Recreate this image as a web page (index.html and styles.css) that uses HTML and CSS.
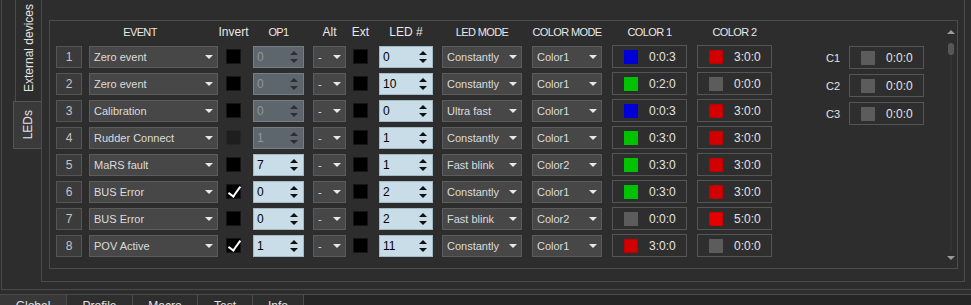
FILE: index.html
```html
<!DOCTYPE html>
<html lang="en">
<head>
    <meta charset="UTF-8">
    <title>LEDs</title>
    <link rel="stylesheet" href="styles.css">
</head>
<body>
    <div class="frame">
        <div class="side-tabs">
            <div class="vtab vtab-ext"><span>External devices</span></div>
            <div class="vtab vtab-leds"><span>LEDs</span></div>
        </div>
        <div class="pane">
            <div class="group">
                <div class="grid">
                    <div class="hd hd-event">EVENT</div>
                    <div class="hd mix w-check">Invert</div>
                    <div class="hd w-op">OP1</div>
                    <div class="hd mix w-alt">Alt</div>
                    <div class="hd mix w-check">Ext</div>
                    <div class="hd mix w-led">LED #</div>
                    <div class="hd w-mode">LED MODE</div>
                    <div class="hd w-cmode">COLOR MODE</div>
                    <div class="hd w-color">COLOR 1</div>
                    <div class="hd w-color">COLOR 2</div>

                    <div class="num">1</div>
                    <div class="combo c-event">Zero event</div>
                    <div class="check"></div>
                    <div class="spin s-op off">0<i></i></div>
                    <div class="combo c-alt">-</div>
                    <div class="check"></div>
                    <div class="spin s-led">0<i></i></div>
                    <div class="combo c-mode">Constantly</div>
                    <div class="combo c-cmode">Color1</div>
                    <div class="color"><b class="sw blue"></b>0:0:3</div>
                    <div class="color"><b class="sw red"></b>3:0:0</div>

                    <div class="num">2</div>
                    <div class="combo c-event">Zero event</div>
                    <div class="check"></div>
                    <div class="spin s-op off">0<i></i></div>
                    <div class="combo c-alt">-</div>
                    <div class="check"></div>
                    <div class="spin s-led">10<i></i></div>
                    <div class="combo c-mode">Constantly</div>
                    <div class="combo c-cmode">Color1</div>
                    <div class="color"><b class="sw green"></b>0:2:0</div>
                    <div class="color"><b class="sw gray"></b>0:0:0</div>

                    <div class="num">3</div>
                    <div class="combo c-event">Calibration</div>
                    <div class="check"></div>
                    <div class="spin s-op off">0<i></i></div>
                    <div class="combo c-alt">-</div>
                    <div class="check"></div>
                    <div class="spin s-led">0<i></i></div>
                    <div class="combo c-mode">Ultra fast</div>
                    <div class="combo c-cmode">Color1</div>
                    <div class="color"><b class="sw blue"></b>0:0:3</div>
                    <div class="color"><b class="sw red"></b>3:0:0</div>

                    <div class="num">4</div>
                    <div class="combo c-event">Rudder Connect</div>
                    <div class="check disabled"></div>
                    <div class="spin s-op off">1<i></i></div>
                    <div class="combo c-alt">-</div>
                    <div class="check"></div>
                    <div class="spin s-led">1<i></i></div>
                    <div class="combo c-mode">Constantly</div>
                    <div class="combo c-cmode">Color1</div>
                    <div class="color"><b class="sw green"></b>0:3:0</div>
                    <div class="color"><b class="sw red"></b>3:0:0</div>

                    <div class="num">5</div>
                    <div class="combo c-event">MaRS fault</div>
                    <div class="check"></div>
                    <div class="spin s-op">7<i></i></div>
                    <div class="combo c-alt">-</div>
                    <div class="check"></div>
                    <div class="spin s-led">1<i></i></div>
                    <div class="combo c-mode">Fast blink</div>
                    <div class="combo c-cmode">Color2</div>
                    <div class="color"><b class="sw green"></b>0:3:0</div>
                    <div class="color"><b class="sw red"></b>3:0:0</div>

                    <div class="num">6</div>
                    <div class="combo c-event">BUS Error</div>
                    <div class="check on"></div>
                    <div class="spin s-op">0<i></i></div>
                    <div class="combo c-alt">-</div>
                    <div class="check"></div>
                    <div class="spin s-led">2<i></i></div>
                    <div class="combo c-mode">Constantly</div>
                    <div class="combo c-cmode">Color1</div>
                    <div class="color"><b class="sw green"></b>0:3:0</div>
                    <div class="color"><b class="sw red"></b>3:0:0</div>

                    <div class="num">7</div>
                    <div class="combo c-event">BUS Error</div>
                    <div class="check"></div>
                    <div class="spin s-op">0<i></i></div>
                    <div class="combo c-alt">-</div>
                    <div class="check"></div>
                    <div class="spin s-led">2<i></i></div>
                    <div class="combo c-mode">Fast blink</div>
                    <div class="combo c-cmode">Color2</div>
                    <div class="color"><b class="sw gray"></b>0:0:0</div>
                    <div class="color"><b class="sw red bright"></b>5:0:0</div>

                    <div class="num">8</div>
                    <div class="combo c-event">POV Active</div>
                    <div class="check on"></div>
                    <div class="spin s-op">1<i></i></div>
                    <div class="combo c-alt">-</div>
                    <div class="check"></div>
                    <div class="spin s-led">11<i></i></div>
                    <div class="combo c-mode">Constantly</div>
                    <div class="combo c-cmode">Color1</div>
                    <div class="color"><b class="sw red"></b>3:0:0</div>
                    <div class="color"><b class="sw gray"></b>0:0:0</div>
                </div>

                <div class="cpanel">
                    <div class="crow"><span class="clabel">C1</span><div class="color"><b class="sw gray"></b>0:0:0</div></div>
                    <div class="crow"><span class="clabel">C2</span><div class="color"><b class="sw gray"></b>0:0:0</div></div>
                    <div class="crow"><span class="clabel">C3</span><div class="color"><b class="sw gray"></b>0:0:0</div></div>
                </div>

                <div class="scroll">
                    <div class="arrow-up"></div>
                    <div class="handle"></div>
                    <div class="track"></div>
                    <div class="arrow-down"></div>
                </div>
            </div>
        </div>
    </div>

    <div class="tabbar">
        <div class="btab active t-global">Global</div>
        <div class="btab t-profile">Profile</div>
        <div class="btab t-macro">Macro</div>
        <div class="btab t-test">Test</div>
        <div class="btab t-info">Info</div>
    </div>
</body>
</html>
```

FILE: styles.css
```css
body {
    margin: 0;
    width: 971px;
    height: 305px;
    overflow: hidden;
    background-color: #2d2d2d;
    font-family: "Liberation Sans", Arial, sans-serif;
    font-size: 11px;
    color: #d8d8d8;
}
.frame {
    margin-left: 1px;
    height: 290px;
    box-sizing: border-box;
    border-left: 1px solid #4b4b4b;
    border-bottom: 1px solid #4b4b4b;
    display: flex;
}

/* vertical tabs on the left */
.side-tabs {
    width: 39px;
    flex-shrink: 0;
    display: flex;
    flex-direction: column;
}
.vtab {
    box-sizing: border-box;
    display: flex;
    align-items: center;
    justify-content: center;
    font-size: 12px;
    color: #e4e4e4;
}
.vtab span {
    writing-mode: vertical-rl;
    transform: rotate(180deg);
}
.vtab-ext {
    margin-left: 13px;
    height: 101px;
    padding-bottom: 5px;
    border-left: 1px solid #4b4b4b;
}
.vtab-leds {
    margin-left: 11px;
    height: 48px;
    background-color: #3a3a3a;
    border: 1px solid #555;
    border-right: none;
}

.pane {
    width: 924px;
    height: 283px;
    margin-top: -1px;
    flex-shrink: 0;
    box-sizing: border-box;
    border: 1px solid #4b4b4b;
    padding: 20px 6px 12px 7px;
    display: flex;
}
.group {
    flex: 1;
    border: 1px solid #4b4b4b;
    padding-left: 6px;
    display: flex;
}

/* led table */
.grid {
    display: grid;
    grid-template-columns: 33px 137px 27px 60px 40px 26px 63px 90px 80px 85px 75px;
    grid-template-rows: 22px;
    grid-auto-rows: 27px;
    align-items: center;
    align-content: start;
}
.hd {
    display: flex;
    justify-content: center;
    white-space: nowrap;
    color: #e8e8e8;
    letter-spacing: -0.6px;
}
.hd.mix {
    font-size: 12px;
    letter-spacing: 0;
}
.hd-event {
    grid-column: span 2;
    width: 161px;
    box-sizing: border-box;
    padding-left: 7px;
}
.w-check { width: 15px; }
.w-op { width: 51px; }
.w-alt { width: 33px; }
.w-led { width: 54px; }
.w-mode { width: 80px; }
.w-cmode { width: 70px; }
.w-color { width: 75px; }

.num {
    width: 26px;
    height: 22px;
    box-sizing: border-box;
    background-color: #3b3b3b;
    border: 1px solid #555;
    color: #c4c4c4;
    font-size: 12px;
    display: flex;
    align-items: center;
    justify-content: center;
}
.combo {
    height: 22px;
    box-sizing: border-box;
    background-color: #474747;
    border: 1px solid #5c5c5c;
    padding: 0 4px;
    display: flex;
    align-items: center;
    justify-content: space-between;
    color: #dcdcdc;
    white-space: nowrap;
}
.combo::after {
    content: "";
    border-left: 4px solid transparent;
    border-right: 4px solid transparent;
    border-top: 4px solid #e8e8e8;
}
.c-event { width: 129px; }
.c-alt { width: 33px; }
.c-mode { width: 80px; }
.c-cmode { width: 70px; }

.check {
    width: 15px;
    height: 15px;
    box-sizing: border-box;
    background-color: #000;
    border: 1px solid #161616;
    display: flex;
    align-items: center;
    justify-content: center;
}
.check.disabled {
    background-color: #1e1e1e;
    border-color: #262626;
}
.check.on::after {
    content: "";
    width: 5px;
    height: 11px;
    margin: -3px 0 0 1px;
    border-right: 2px solid #fff;
    border-bottom: 2px solid #fff;
    transform: rotate(36deg);
}

.spin {
    height: 22px;
    box-sizing: border-box;
    background-color: #c9dde8;
    border: 1px solid #a3b9c5;
    color: #000;
    font-size: 12px;
    padding: 0 5px 0 3px;
    display: flex;
    align-items: center;
    justify-content: space-between;
}
.spin i {
    display: flex;
    flex-direction: column;
    gap: 4px;
}
.spin i::before,
.spin i::after {
    content: "";
    border-left: 4px solid transparent;
    border-right: 4px solid transparent;
}
.spin i::before { border-bottom: 4px solid #111; }
.spin i::after { border-top: 4px solid #111; }
.spin.off {
    background-color: #5d666d;
    border-color: #767e84;
    color: #8e969c;
}
.spin.off i::before { border-bottom-color: #2b3034; }
.spin.off i::after { border-top-color: #2b3034; }
.s-op { width: 51px; }
.s-led { width: 54px; }

.color {
    width: 75px;
    height: 23px;
    box-sizing: border-box;
    background-color: #2e2e2e;
    border: 1px solid #555;
    padding-left: 11px;
    display: flex;
    align-items: center;
    gap: 11px;
    font-size: 12px;
    color: #e4e4e4;
}
.sw {
    width: 14px;
    height: 14px;
    flex-shrink: 0;
}
.sw.blue { background-color: #0000d6; }
.sw.green { background-color: #00c200; }
.sw.red {
    background-color: #d20000;
    box-shadow: inset 0 0 2px #8c0000;
}
.sw.red.bright { background-color: #e60000; }
.sw.gray { background-color: #5c5c5c; }

/* preset colours */
.cpanel {
    margin-left: 54px;
    margin-top: 25px;
    display: flex;
    flex-direction: column;
    gap: 5px;
}
.crow {
    display: flex;
    align-items: center;
}
.clabel {
    width: 23px;
    color: #e4e4e4;
}

.scroll {
    margin-left: auto;
    width: 12px;
    padding: 9px 0 8px;
    display: flex;
    flex-direction: column;
    align-items: center;
}
.arrow-up {
    border-left: 4px solid transparent;
    border-right: 4px solid transparent;
    border-bottom: 4px solid #9a9a9a;
}
.handle {
    margin-top: 9px;
    width: 6px;
    height: 12px;
    border-radius: 3px;
    background-color: #575757;
}
.track {
    flex: 1;
    width: 2px;
    margin-bottom: 5px;
    background-color: #333;
}
.arrow-down {
    border-left: 4px solid transparent;
    border-right: 4px solid transparent;
    border-top: 4px solid #9a9a9a;
}

/* bottom tabs */
.tabbar {
    margin-top: 4px;
    height: 20px;
    border-top: 1px solid #4b4b4b;
    background-color: #252525;
    display: flex;
}
.btab {
    box-sizing: border-box;
    border-right: 1px solid #4b4b4b;
    background-color: #2e2e2e;
    padding-top: 4px;
    text-align: center;
    font-size: 12px;
    color: #e2e2e2;
}
.btab.active { background-color: #383838; }
.t-global { width: 67px; }
.t-profile { width: 66px; }
.t-macro { width: 65px; }
.t-test { width: 55px; }
.t-info { width: 51px; }
```
